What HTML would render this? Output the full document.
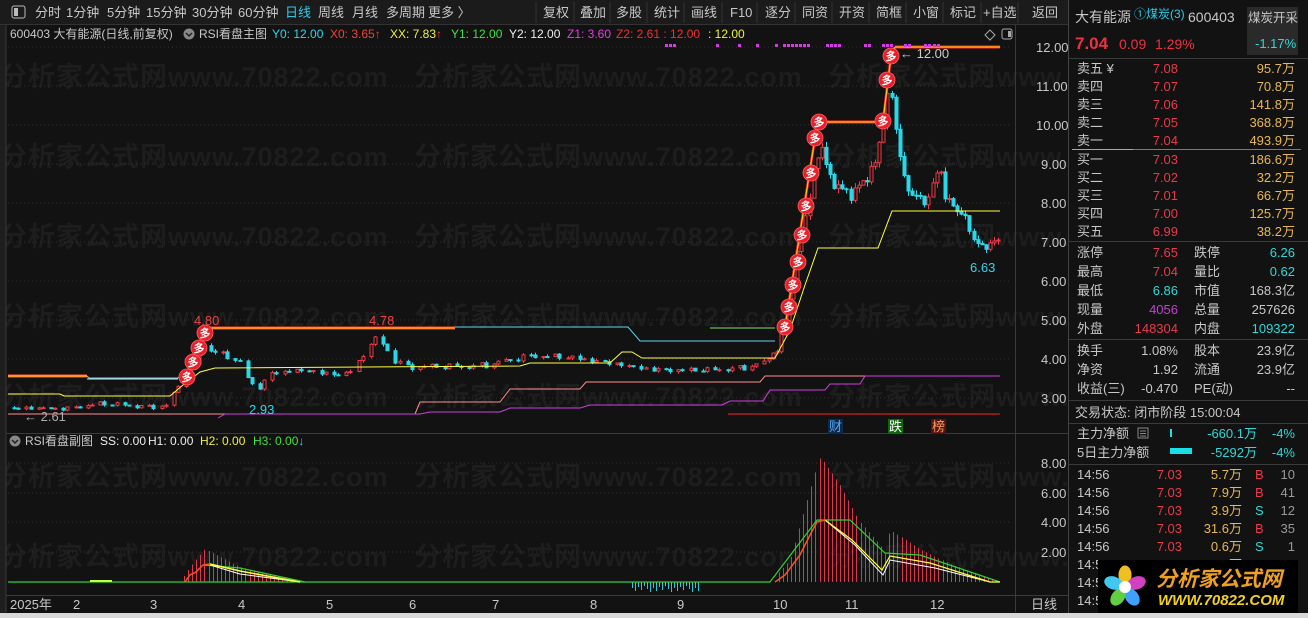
<!DOCTYPE html>
<html><head><meta charset="utf-8">
<style>
*{margin:0;padding:0;box-sizing:border-box}
body{width:1308px;height:618px;background:#121212;overflow:hidden;position:relative;font-family:"Liberation Sans","Noto Sans CJK SC",sans-serif;font-size:13px;color:#c8c8c8}
.a{position:absolute;white-space:nowrap;line-height:1}
.tb{position:absolute;top:0;left:0;width:1308px;height:25px;background:#1b1b1b;border-bottom:1px solid #333}
.r{text-align:right}
.wm{position:absolute;font-size:27px;color:#1d1d1d;white-space:nowrap;letter-spacing:1px;font-weight:bold}
.hd{font-size:12px}
</style></head><body>
<div class="tb"></div>
<div class="wm" style="left:0;top:55px">分析家公式网www.70822.com &nbsp; 分析家公式网www.70822.com &nbsp; 分析家公式网www.70822.com</div>
<div class="wm" style="left:0;top:135px">分析家公式网www.70822.com &nbsp; 分析家公式网www.70822.com &nbsp; 分析家公式网www.70822.com</div>
<div class="wm" style="left:0;top:215px">分析家公式网www.70822.com &nbsp; 分析家公式网www.70822.com &nbsp; 分析家公式网www.70822.com</div>
<div class="wm" style="left:0;top:295px">分析家公式网www.70822.com &nbsp; 分析家公式网www.70822.com &nbsp; 分析家公式网www.70822.com</div>
<div class="wm" style="left:0;top:375px">分析家公式网www.70822.com &nbsp; 分析家公式网www.70822.com &nbsp; 分析家公式网www.70822.com</div>
<div class="wm" style="left:0;top:455px">分析家公式网www.70822.com &nbsp; 分析家公式网www.70822.com &nbsp; 分析家公式网www.70822.com</div>
<div class="wm" style="left:0;top:535px">分析家公式网www.70822.com &nbsp; 分析家公式网www.70822.com &nbsp; 分析家公式网www.70822.com</div>

<svg id="sv" width="1308" height="618" style="position:absolute;left:0;top:0">
<rect x="0" y="25" width="6" height="590" fill="#1e1e1e"/>
<line x1="6" y1="25" x2="6" y2="612" stroke="#3a3a3a"/>
<line x1="1015.5" y1="25" x2="1015.5" y2="612" stroke="#3a3a3a"/>
<line x1="1068.5" y1="0" x2="1068.5" y2="618" stroke="#444"/>
<line x1="6" y1="433.5" x2="1068" y2="433.5" stroke="#3a3a3a"/>
<line x1="6" y1="595.5" x2="1068" y2="595.5" stroke="#3a3a3a"/>
<rect x="0" y="613" width="1308" height="5" fill="#d8d8d8"/>
<g stroke="#333" stroke-dasharray="1,3">
<line x1="8" y1="47" x2="1012" y2="47"/><line x1="8" y1="86" x2="1012" y2="86"/><line x1="8" y1="125" x2="1012" y2="125"/><line x1="8" y1="164" x2="1012" y2="164"/><line x1="8" y1="203" x2="1012" y2="203"/><line x1="8" y1="242" x2="1012" y2="242"/><line x1="8" y1="281" x2="1012" y2="281"/><line x1="8" y1="320" x2="1012" y2="320"/><line x1="8" y1="359" x2="1012" y2="359"/><line x1="8" y1="398" x2="1012" y2="398"/>
<line x1="8" y1="463" x2="1012" y2="463"/><line x1="8" y1="493" x2="1012" y2="493"/><line x1="8" y1="522" x2="1012" y2="522"/><line x1="8" y1="552" x2="1012" y2="552"/>
</g>
<g stroke="#333">
<line x1="536" y1="2" x2="536" y2="23"/><line x1="574" y1="2" x2="574" y2="23"/><line x1="610" y1="2" x2="610" y2="23"/><line x1="647" y1="2" x2="647" y2="23"/><line x1="684" y1="2" x2="684" y2="23"/><line x1="722" y1="2" x2="722" y2="23"/><line x1="757" y1="2" x2="757" y2="23"/><line x1="795" y1="2" x2="795" y2="23"/><line x1="832" y1="2" x2="832" y2="23"/><line x1="869" y1="2" x2="869" y2="23"/><line x1="906" y1="2" x2="906" y2="23"/><line x1="943" y1="2" x2="943" y2="23"/><line x1="981" y1="2" x2="981" y2="23"/><line x1="1018" y1="2" x2="1018" y2="23"/>
</g>
<rect x="12" y="6" width="13" height="12" rx="2" fill="none" stroke="#bbb"/><rect x="14" y="8" width="4" height="8" fill="#bbb"/>
<g id="cand"></g>
<polyline fill="none" stroke="#ff5533" stroke-width="3" points="8,376 87,376"/>
<polyline fill="none" stroke="#ffd21e" stroke-width="1" points="8,376 87,376"/>
<polyline fill="none" stroke="#60d8e8" stroke-width="1" points="87,376 89,378 178,378 180,376"/>
<polyline fill="none" stroke="#ddd" stroke-width="1" points="87,379 178,379"/>
<polyline fill="none" stroke="#ff4422" stroke-width="3" points="205,328 455,328"/>
<polyline fill="none" stroke="#ffd21e" stroke-width="1" points="205,328 455,328"/>
<polyline fill="none" stroke="#60d8e8" stroke-width="1" points="455,327 628,327 640,341 775,341"/>
<polyline fill="none" stroke="#7de060" stroke-width="1" points="710,328 775,328"/>
<polyline fill="none" stroke="#ffff40" stroke-width="1" points="8,394 60,394 64,396 170,396 183,385 200,372 215,368 520,366 530,363 610,363 622,352 632,352 642,358 775,358 790,330 805,285 818,248 878,248 892,211 1000,211"/>
<polyline fill="none" stroke="#ff8f8f" stroke-width="1" points="8,414 415,414 420,402 500,402 510,389 580,389 586,382 760,382 765,376 865,376"/>
<polyline fill="none" stroke="#d23ce0" stroke-width="1" points="218,418 225,414 420,414 430,412 500,412 510,408 580,408 590,405 722,405 730,401 763,401 770,390 825,390 830,384 860,384 865,376 1000,376"/>
<polyline fill="none" stroke="#d02020" stroke-width="1.2" points="728,414 1000,414"/>
<polyline fill="none" stroke="#ff3318" stroke-width="3" points="895,47 1000,47"/>
<polyline fill="none" stroke="#ffd21e" stroke-width="1" points="895,47 1000,47"/>
<polyline fill="none" stroke="#ff3318" stroke-width="3" points="819,122 881,122"/>
<polyline fill="none" stroke="#ffd21e" stroke-width="1" points="819,122 881,122"/>
<polyline fill="none" stroke="#ff3318" stroke-width="2.5" points="785,327 815,138 819,122"/>
<polyline fill="none" stroke="#ffd21e" stroke-width="1" points="785,327 815,138 819,122"/>
<polyline fill="none" stroke="#ff3318" stroke-width="2.5" points="883,121 891,56 895,47"/>
<polyline fill="none" stroke="#ffd21e" stroke-width="1" points="883,121 891,56 895,47"/>
<polyline fill="none" stroke="#ff3318" stroke-width="2.5" points="187,377 205,333"/>
<g fill="#d23ce0" id="dots"></g>
<g id="bars"></g>
<polyline fill="none" stroke="#30d030" stroke-width="1.2" points="8,582 770,582 817,520 850,520 885,553 920,555 1000,582"/>
<polyline fill="none" stroke="#30d030" stroke-width="1.2" points="203,565 240,568 305,582"/>
<polyline fill="none" stroke="#ffffff" stroke-width="1" points="210,565 240,574 300,582"/>
<polyline fill="none" stroke="#ffffff" stroke-width="1" points="825,520 855,545 883,575 890,560 935,568 990,582 1000,582"/>
<polyline fill="none" stroke="#ffff40" stroke-width="1.2" points="825,520 852,540 882,570 890,556 930,563 990,582 1000,582"/>
<polyline fill="none" stroke="#ff5020" stroke-width="1.5" points="185,582 190,575 196,572 203,565 210,564"/>
<polyline fill="none" stroke="#ffff40" stroke-width="1.5" points="210,564 240,571 300,582"/>
<polyline fill="none" stroke="#ff5020" stroke-width="1.5" points="775,582 785,575 800,555 810,535 817,522 825,520"/>
<line x1="90" y1="581" x2="112" y2="581" stroke="#c8ff40" stroke-width="2"/>
<g id="circ"></g>
<path d="M990,30 L995,35 L990,40 L985,35Z" fill="none" stroke="#aaa"/>
<rect x="1002" y="29" width="10" height="10" rx="2" fill="none" stroke="#aaa"/><rect x="1008" y="31" width="3" height="6" fill="#aaa"/>
<circle cx="189" cy="34" r="5.5" fill="#888"/><path d="M186,33 L189,36 L192,33" stroke="#222" fill="none" stroke-width="1.5"/>
<circle cx="15" cy="441" r="5.5" fill="#888"/><path d="M12,440 L15,443 L18,440" stroke="#222" fill="none" stroke-width="1.5"/>
<rect x="1069" y="0" width="239" height="613" fill="#121212"/>
<rect x="1247" y="7" width="51" height="48" fill="#2a2a2a"/>
<g stroke="#3a3a3a"><line x1="1069" y1="58.5" x2="1308" y2="58.5"/><line x1="1069" y1="241.5" x2="1308" y2="241.5"/><line x1="1069" y1="339.5" x2="1308" y2="339.5"/><line x1="1069" y1="400.5" x2="1308" y2="400.5"/><line x1="1069" y1="423.5" x2="1308" y2="423.5"/><line x1="1069" y1="464.5" x2="1308" y2="464.5"/></g>
<line x1="1072" y1="149.5" x2="1133" y2="149.5" stroke="#e0a040"/><line x1="1133" y1="149.5" x2="1301" y2="149.5" stroke="#3a8ad0"/>
<line x1="1171" y1="429" x2="1171" y2="437" stroke="#18e0e8" stroke-width="2"/>
<rect x="1170" y="448" width="22" height="6" fill="#18e0e8"/>
<rect x="1138" y="428" width="10" height="10" fill="none" stroke="#888"/>
<line x1="1140" y1="431" x2="1146" y2="431" stroke="#888"/><line x1="1140" y1="433.5" x2="1146" y2="433.5" stroke="#888"/><line x1="1140" y1="436" x2="1146" y2="436" stroke="#888"/>
</svg>

<div class="a" style="left:35px;top:6px">分时</div>
<div class="a" style="left:66px;top:6px">1分钟</div>
<div class="a" style="left:107px;top:6px">5分钟</div>
<div class="a" style="left:146px;top:6px">15分钟</div>
<div class="a" style="left:192px;top:6px">30分钟</div>
<div class="a" style="left:238px;top:6px">60分钟</div>
<div class="a" style="left:285px;top:6px;color:#2ec8e8">日线</div>
<div class="a" style="left:318px;top:6px">周线</div>
<div class="a" style="left:352px;top:6px">月线</div>
<div class="a" style="left:386px;top:6px">多周期</div>
<div class="a" style="left:428px;top:6px">更多 〉</div>
<div class="a" style="left:543px;top:6px">复权</div>
<div class="a" style="left:580px;top:6px">叠加</div>
<div class="a" style="left:616px;top:6px">多股</div>
<div class="a" style="left:654px;top:6px">统计</div>
<div class="a" style="left:691px;top:6px">画线</div>
<div class="a" style="left:730px;top:6px">F10</div>
<div class="a" style="left:765px;top:6px">逐分</div>
<div class="a" style="left:802px;top:6px">同资</div>
<div class="a" style="left:839px;top:6px">开资</div>
<div class="a" style="left:876px;top:6px">简框</div>
<div class="a" style="left:913px;top:6px">小窗</div>
<div class="a" style="left:950px;top:6px">标记</div>
<div class="a" style="left:983px;top:6px">+自选</div>
<div class="a" style="left:1032px;top:6px">返回</div>

<div class="a hd" style="left:10px;top:28px">600403 大有能源(日线,前复权)</div>
<div class="a hd" style="left:199px;top:28px">RSI看盘主图</div>
<div class="a hd" style="left:272px;top:28px;color:#2ed8e8">Y0: 12.00</div>
<div class="a hd" style="left:330px;top:28px;color:#f04040">X0: 3.65↑</div>
<div class="a hd" style="left:390px;top:28px;color:#f0f040">XX: 7.83<span style="color:#f04040">↑</span></div>
<div class="a hd" style="left:451px;top:28px;color:#40e040">Y1: 12.00</div>
<div class="a hd" style="left:509px;top:28px;color:#eee">Y2: 12.00</div>
<div class="a hd" style="left:567px;top:28px;color:#e040e0">Z1: 3.60</div>
<div class="a hd" style="left:616px;top:28px;color:#f03030">Z2: 2.61 : 12.00</div>
<div class="a hd" style="left:708px;top:28px;color:#f0f040">: 12.00</div>

<div class="a" style="left:1036px;top:41px">12.00</div>
<div class="a" style="left:1036px;top:80px">11.00</div>
<div class="a" style="left:1036px;top:119px">10.00</div>
<div class="a" style="left:1041px;top:158px">9.00</div>
<div class="a" style="left:1041px;top:197px">8.00</div>
<div class="a" style="left:1041px;top:236px">7.00</div>
<div class="a" style="left:1041px;top:275px">6.00</div>
<div class="a" style="left:1041px;top:314px">5.00</div>
<div class="a" style="left:1041px;top:353px">4.00</div>
<div class="a" style="left:1041px;top:392px">3.00</div>
<div class="a" style="left:1041px;top:457px">8.00</div>
<div class="a" style="left:1041px;top:487px">6.00</div>
<div class="a" style="left:1041px;top:516px">4.00</div>
<div class="a" style="left:1041px;top:546px">2.00</div>

<div class="a" style="left:194px;top:314px;color:#f04040">4.80</div>
<div class="a" style="left:369px;top:314px;color:#f04040">4.78</div>
<div class="a" style="left:249px;top:403px;color:#2ed8e8">2.93</div>
<div class="a" style="left:24px;top:410px;color:#aaa">← 2.61</div>
<div class="a" style="left:900px;top:47px;color:#ccc">← 12.00</div>
<div class="a" style="left:970px;top:261px;color:#2ed8e8">6.63</div>
<div class="a" style="left:828px;top:419px;color:#58a8f0;background:#0c2a50;padding:1px">财</div>
<div class="a" style="left:888px;top:419px;color:#fff;background:#0a6a0a;padding:1px">跌</div>
<div class="a" style="left:931px;top:419px;color:#f0a060;background:#5a1010;padding:1px">榜</div>

<div class="a hd" style="left:25px;top:435px">RSI看盘副图</div>
<div class="a hd" style="left:100px;top:435px;color:#eee">SS: 0.00</div>
<div class="a hd" style="left:148px;top:435px;color:#eee">H1: 0.00</div>
<div class="a hd" style="left:200px;top:435px;color:#f0f040">H2: 0.00</div>
<div class="a hd" style="left:253px;top:435px;color:#40e040">H3: 0.00<span style="color:#2ed8e8">↓</span></div>

<div class="a" style="left:10px;top:598px">2025年</div>
<div class="a" style="left:73px;top:598px">2</div>
<div class="a" style="left:150px;top:598px">3</div>
<div class="a" style="left:238px;top:598px">4</div>
<div class="a" style="left:326px;top:598px">5</div>
<div class="a" style="left:409px;top:598px">6</div>
<div class="a" style="left:492px;top:598px">7</div>
<div class="a" style="left:590px;top:598px">8</div>
<div class="a" style="left:677px;top:598px">9</div>
<div class="a" style="left:773px;top:598px">10</div>
<div class="a" style="left:845px;top:598px">11</div>
<div class="a" style="left:930px;top:598px">12</div>
<div class="a" style="left:1031px;top:598px">日线</div>

<div class="a" style="left:1075px;top:10px;font-size:14px">大有能源</div>
<div class="a" style="left:1134px;top:8px;font-size:12px;color:#2ec8e8">①煤炭(3)</div>
<div class="a" style="left:1188px;top:10px;font-size:14px">600403</div>
<div class="a" style="left:1248px;top:12px;font-size:12.5px">煤炭开采</div>
<div class="a" style="left:1255px;top:37px;color:#2ed8d8">-1.17%</div>
<div class="a" style="left:1075px;top:35px;font-size:17px;font-weight:bold;color:#f03040">7.04</div>
<div class="a" style="left:1119px;top:37px;font-size:14px;color:#f03040">0.09</div>
<div class="a" style="left:1155px;top:37px;font-size:14px;color:#f03040">1.29%</div>

<div id="rp"></div>
<div class="a" style="left:1075px;top:406px">交易状态: 闭市阶段 15:00:04</div>
<div class="a" style="left:1077px;top:427px">主力净额</div>
<div class="a" style="left:1077px;top:446px">5日主力净额</div>
<div class="a r" style="left:1177px;width:80px;top:427px;color:#2ed8d8">-660.1万</div>
<div class="a r" style="left:1177px;width:80px;top:446px;color:#2ed8d8">-5292万</div>
<div class="a r" style="left:1250px;width:45px;top:427px;color:#2ed8d8">-4%</div>
<div class="a r" style="left:1250px;width:45px;top:446px;color:#2ed8d8">-4%</div>

<div style="position:absolute;left:1098px;top:560px;width:200px;height:53px;background:#000;z-index:5">
<svg width="60" height="53" style="position:absolute;left:0;top:0">
<g transform="translate(27,27)">
<ellipse cx="0" cy="-12" rx="6.5" ry="9.5" fill="#f0c020"/>
<ellipse cx="11.5" cy="-4" rx="6.5" ry="9.5" fill="#d040c0" transform="rotate(72 11.5 -4)"/>
<ellipse cx="7" cy="10" rx="6.5" ry="9.5" fill="#40a0ff" transform="rotate(144 7 10)"/>
<ellipse cx="-7" cy="10" rx="6.5" ry="9.5" fill="#60d040" transform="rotate(216 -7 10)"/>
<ellipse cx="-11.5" cy="-4" rx="6.5" ry="9.5" fill="#40c8f0" transform="rotate(288 -11.5 -4)"/>
<circle cx="0" cy="0" r="6" fill="#fff"/>
</g></svg>
<div class="a" style="left:58px;top:9px;font-size:21px;font-weight:bold;font-style:italic;color:#f0a020">分析家公式网</div>
<div class="a" style="left:60px;top:33px;font-size:15px;font-weight:bold;font-style:italic;color:#f0d020">WWW.70822.COM</div>
</div>

<script>
(function(){
var rp=document.getElementById('rp'),h='';
function t(x,y,s,c,w,al){h+='<div class="a'+(al?' r':'')+'" style="left:'+x+'px;top:'+y+'px;'+(w?'width:'+w+'px;':'')+'color:'+c+'">'+s+'</div>';}
var ob=[['卖五 ¥','7.08','95.7万'],['卖四','7.07','70.8万'],['卖三','7.06','141.8万'],['卖二','7.05','368.8万'],['卖一','7.04','493.9万'],['买一','7.03','186.6万'],['买二','7.02','32.2万'],['买三','7.01','66.7万'],['买四','7.00','125.7万'],['买五','6.99','38.2万']];
var ys=[62,80,98,116,134,153,171,189,207,225];
ob.forEach(function(r,i){t(1077,ys[i],r[0],'#c8c8c8');t(1120,ys[i],r[1],'#e83a4a',58,1);t(1200,ys[i],r[2],'#e8b850',95,1);});
var st=[['涨停','7.65','#e83a4a','跌停','6.26','#2ed8d8'],['最高','7.04','#e83a4a','量比','0.62','#2ed8d8'],['最低','6.86','#2ed8d8','市值','168.3亿','#c8c8c8'],['现量','4056','#c040d0','总量','257626','#c8c8c8'],['外盘','148304','#e83a4a','内盘','109322','#2ed8d8']];
var sy=[246,265,284,303,322];
st.forEach(function(r,i){t(1077,sy[i],r[0],'#c8c8c8');t(1110,sy[i],r[1],r[2],68,1);t(1194,sy[i],r[3],'#c8c8c8');t(1220,sy[i],r[4],r[5],75,1);});
var s2=[['换手','1.08%','股本','23.9亿'],['净资','1.92','流通','23.9亿'],['收益(三)','-0.470','PE(动)','--']];
[344,363,382].forEach(function(y,i){var r=s2[i];t(1077,y,r[0],'#c8c8c8');t(1110,y,r[1],'#c8c8c8',68,1);t(1194,y,r[2],'#c8c8c8');t(1220,y,r[3],'#c8c8c8',75,1);});
var tk=[['7.03','5.7万','B','10'],['7.03','7.9万','B','41'],['7.03','3.9万','S','12'],['7.03','31.6万','B','35'],['7.03','0.6万','S','1'],['7.03','4.8万','S','6'],['7.03','1.2万','B','3'],['7.03','2.0万','B','5']];
[468,486,504,522,540,558,576,594].forEach(function(y,i){var r=tk[i];t(1077,y,'14:56','#c8c8c8');t(1130,y,r[0],'#e83a4a',52,1);t(1190,y,r[1],'#e8b850',52,1);t(1255,y,r[2],r[2]=='B'?'#e83a4a':'#2ed8d8');t(1270,y,r[3],'#999',25,1);});
rp.innerHTML=h;

var NS='http://www.w3.org/2000/svg';
function el(g,tag,at){var e=document.createElementNS(NS,tag);for(var k in at)e.setAttribute(k,at[k]);g.appendChild(e);return e;}
var kp=[[10,2.75],[60,2.72],[100,2.85],[150,2.78],[168,2.8],[178,3.3],[195,4.0],[205,4.5],[212,4.2],[225,4.1],[240,3.9],[250,3.4],[258,3.2],[270,3.65],[300,3.7],[340,3.6],[355,3.75],[365,4.2],[378,4.6],[392,4.0],[410,3.8],[450,3.8],[490,3.85],[515,4.0],[530,4.1],[560,4.05],[600,3.95],[640,3.75],[700,3.7],[750,3.8],[765,3.9],[778,4.3],[785,5.0],[800,7.0],[812,8.5],[820,9.6],[830,8.6],[850,8.2],[865,8.6],[875,9.0],[883,10.1],[890,11.0],[898,9.5],[905,8.4],[925,8.0],[935,8.6],[940,9.0],[945,8.1],[955,7.9],[965,7.6],[975,7.0],[982,6.85],[992,7.0],[1000,7.0]];
function ip(a,x){for(var i=1;i<a.length;i++){if(x<=a[i][0]){var p=a[i-1],q=a[i];return p[1]+(q[1]-p[1])*(x-p[0])/(q[0]-p[0]);}}return a[a.length-1][1];}
function Y(p){return 47+(12-p)*39;}
var g=document.getElementById('cand'),prev=2.75,i=0;
for(var x=10;x<=1000;x+=4.1){i++;
 if(i%3==1 && x<770) {continue;}
 var base=ip(kp,x);var nz=Math.sin(i*1.7)*0.5+Math.sin(i*3.1)*0.5;
 var c=base*(1+nz*0.02);var o=prev;var up=c>=o;
 var hi=Math.max(o,c)*(1+Math.abs(Math.sin(i*2.3))*0.015),lo=Math.min(o,c)*(1-Math.abs(Math.cos(i*1.3))*0.015);
 var col=up?'#f03848':'#28d8e8';var xx=Math.round(x)+0.5;
 el(g,'line',{x1:xx,x2:xx,y1:Y(hi),y2:Y(lo),stroke:col});
 var top=Y(Math.max(o,c)),bh=Math.max(1,Math.abs(Y(o)-Y(c)));
 el(g,'rect',{x:xx-1.5,y:top,width:3,height:bh,fill:up?'#121212':col,stroke:col,'stroke-width':1});
 prev=c;}
var bp=[[180,0],[190,1],[205,2.2],[240,1.0],[300,0],[770,0],[790,1.5],[805,5],[820,8.4],[840,6.5],[860,4],[880,2.5],[885,1.9],[890,3.5],[920,2.2],[950,1.2],[1000,0]];
var b=document.getElementById('bars');
for(var x=184;x<=1000;x+=4.1){if(x>300&&x<775)continue;var v=ip(bp,x);if(v<=0.05)continue;var xx=Math.round(x)+0.5;
 el(b,'line',{x1:xx,x2:xx,y1:582-v*14.9,y2:582,stroke:'#d83848'});}
for(var x=632;x<700;x+=3){var xx=Math.round(x)+0.5;el(b,'line',{x1:xx,x2:xx,y1:582,y2:586+(x%7),stroke:'#28c8d8'});}
var dg=document.getElementById('dots');
[665,669,673,716,738,756,775,783,787,791,795,799,803,807,826,830,834,838,864,868,882,886,890,904,908,924,928,933,937].forEach(function(v){el(dg,'rect',{x:v,y:44,width:3,height:3});});
var cg=document.getElementById('circ');
[[187,377],[193,362],[199,348],[205,333],[785,327],[789,307],[793,285],[798,262],[802,235],[806,206],[811,173],[815,138],[819,122],[883,121],[887,80],[891,56]].forEach(function(p){
 el(cg,'circle',{cx:p[0],cy:p[1],r:8,fill:'#e8202a',stroke:'#ff6060','stroke-width':0.8});
 var tx=el(cg,'text',{x:p[0],y:p[1]+4,'text-anchor':'middle','font-size':11,'font-weight':'bold',fill:'#fff','font-family':'Noto Sans CJK SC,sans-serif'});tx.textContent='多';});
})();
</script>
</body></html>
